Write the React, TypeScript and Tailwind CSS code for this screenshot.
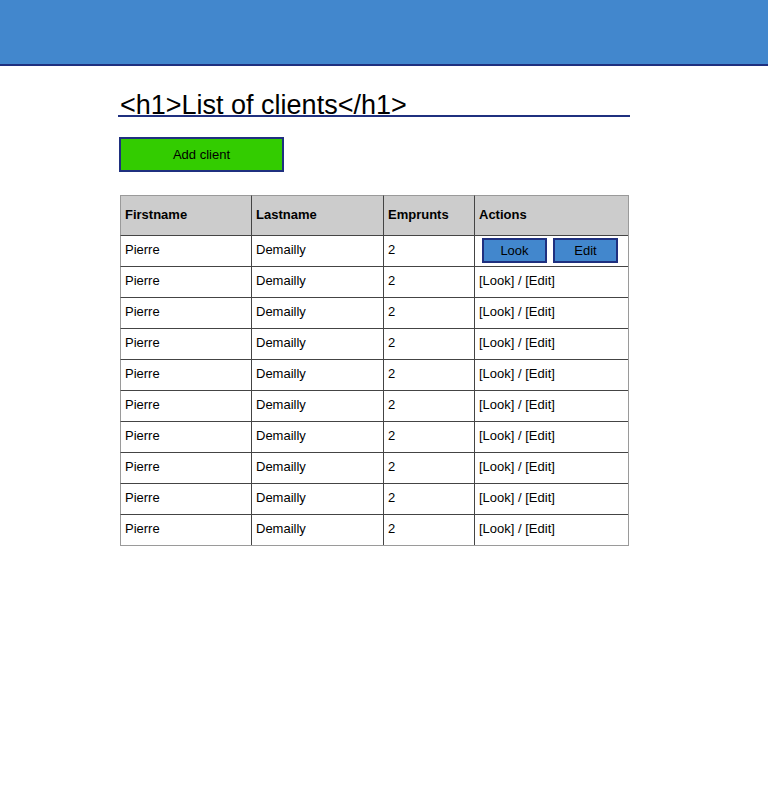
import React from 'react';

const clients = Array.from({ length: 10 }, (_, i) => ({
  id: i,
  firstname: 'Pierre',
  lastname: 'Demailly',
  emprunts: 2,
}));

const headCell = 'flex items-center pl-1 pb-[2px] h-[40px] border-t border-t-[#9a9a9a] font-bold bg-[#cccccc]';
const rowCell = 'flex items-center pl-1 pb-[2px] h-[31px] border-t border-t-[#444444]';

const App = () => {
  return (
    <div className="min-h-screen bg-white text-black font-['Liberation_Sans',Arial,sans-serif] text-[13px]">
      {/* Top bar */}
      <div className="h-[66px] bg-[#4287cd] border-b-2 border-[#1f307f]" />

      <div className="ml-[118px]">
        <h1 className="mt-[29px] w-[512px] pl-[2px] text-[27px] leading-[20px] border-b-2 border-[#1f307f]">
          {'<h1>List of clients</h1>'}
        </h1>

        <button className="mt-[20px] ml-px block w-[165px] h-[35px] bg-[#33cc00] border-2 border-[#1f307f] text-[13px]">
          Add client
        </button>

        {/* Clients table */}
        <div className="mt-[23px] ml-[2px] w-[509px] grid grid-cols-[131px_132px_91px_154px] border-r border-b border-[#9a9a9a]">
          <div className={`${headCell} border-l border-l-[#9a9a9a]`}>Firstname</div>
          <div className={`${headCell} border-l border-l-[#444444]`}>Lastname</div>
          <div className={`${headCell} border-l border-l-[#444444]`}>Emprunts</div>
          <div className={`${headCell} border-l border-l-[#444444]`}>Actions</div>

          {clients.map((c, i) => (
            <React.Fragment key={c.id}>
              <div className={`${rowCell} border-l border-l-[#9a9a9a]`}>{c.firstname}</div>
              <div className={`${rowCell} border-l border-l-[#444444]`}>{c.lastname}</div>
              <div className={`${rowCell} border-l border-l-[#444444]`}>{c.emprunts}</div>
              <div className={`${rowCell} border-l border-l-[#444444]`}>
                {i === 0 ? (
                  <div className="flex gap-[6px] ml-[3px]">
                    <button className="w-[65px] h-[25px] pt-px bg-[#4287cd] border-2 border-[#1f307f] text-[13px]">Look</button>
                    <button className="w-[65px] h-[25px] pt-px bg-[#4287cd] border-2 border-[#1f307f] text-[13px]">Edit</button>
                  </div>
                ) : (
                  <span>[Look] / [Edit]</span>
                )}
              </div>
            </React.Fragment>
          ))}
        </div>
      </div>
    </div>
  );
};

export default App;
